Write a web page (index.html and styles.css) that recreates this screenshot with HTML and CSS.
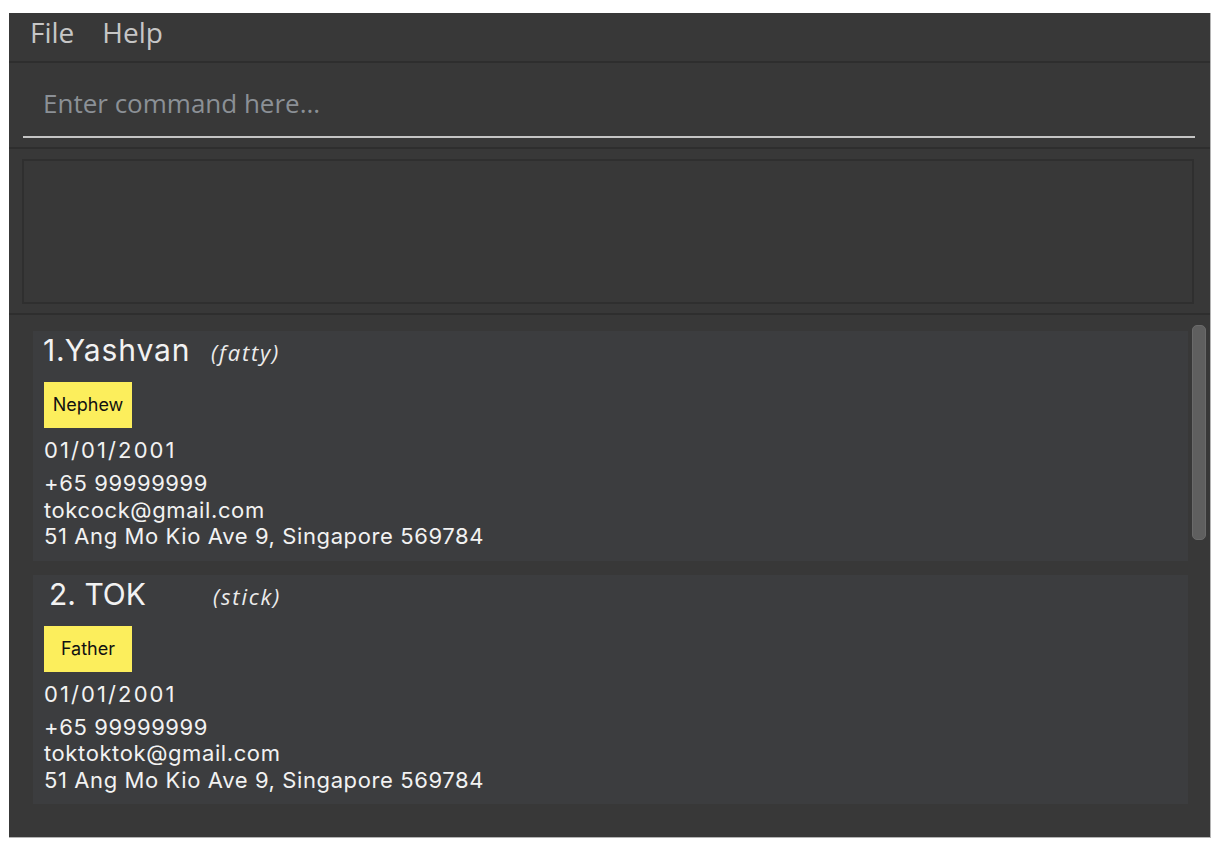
FILE: index.html
```html
<!DOCTYPE html>
<html lang="en">
<head>
<meta charset="utf-8">
<title>Address Book</title>
<link rel="stylesheet" href="styles.css">
</head>
<body>
<div class="app">
  <nav class="menubar">
    <span class="menu-item">File</span>
    <span class="menu-item">Help</span>
  </nav>
  <section class="command">
    <input class="command-input" type="text" placeholder="Enter command here...">
  </section>
  <section class="result">
    <div class="result-box"></div>
  </section>
  <section class="list">
    <div class="cards">
      <article class="card">
        <div class="card-head">
          <span class="card-name">1.Yashvan</span>
          <span class="card-nick">(fatty)</span>
        </div>
        <span class="tag">Nephew</span>
        <div class="card-date">01/01/2001</div>
        <div class="card-line">+65 99999999</div>
        <div class="card-line">tokcock@gmail.com</div>
        <div class="card-line">51 Ang Mo Kio Ave 9, Singapore 569784</div>
      </article>
      <article class="card">
        <div class="card-head">
          <span class="card-name card-name--indent">2. TOK</span>
          <span class="card-nick card-nick--shift">(stick)</span>
        </div>
        <span class="tag">Father</span>
        <div class="card-date">01/01/2001</div>
        <div class="card-line">+65 99999999</div>
        <div class="card-line">toktoktok@gmail.com</div>
        <div class="card-line">51 Ang Mo Kio Ave 9, Singapore 569784</div>
      </article>
    </div>
    <div class="scroll-track">
      <div class="scroll-thumb"></div>
    </div>
  </section>
</div>
</body>
</html>
```
FILE: styles.css
```css
html, body {
  margin: 0;
  padding: 0;
  background: #ffffff;
}

.app {
  margin: 13px 0 0 9px;
  width: 1201px;
  height: 824px;
  background: #383838;
  border-right: 1px solid #b4b4b4;
  border-bottom: 1px solid #b4b4b4;
  display: flex;
  flex-direction: column;
  overflow: hidden;
}

.menubar {
  height: 48px;
  border-bottom: 2px solid #2e2e2e;
  display: flex;
  gap: 28px;
  padding-left: 21px;
  font-family: "Open Sans", "Noto Sans", sans-serif;
  font-size: 28px;
  line-height: 38px;
  color: #c6c6c6;
  flex: none;
}

.command {
  height: 86px;
  box-sizing: border-box;
  padding: 24px 15px 0 14px;
  border-bottom: 2px solid #2e2e2e;
  flex: none;
}

.command-input {
  display: block;
  width: 100%;
  box-sizing: border-box;
  height: 51px;
  margin: 0;
  padding: 0 0 17px 20px;
  border: none;
  border-bottom: 2px solid #c4c4c4;
  background: transparent;
  outline: none;
  font-family: "Open Sans", "Noto Sans", sans-serif;
  font-size: 26px;
  line-height: 32px;
  color: #e0e0e0;
}

.command-input::placeholder {
  color: #8b9096;
}

.result {
  height: 166px;
  box-sizing: border-box;
  padding: 10px 16px 9px 13px;
  border-bottom: 2px solid #2e2e2e;
  flex: none;
}

.result-box {
  height: 100%;
  box-sizing: border-box;
  border: 2px solid #2f2f2f;
  background: #383838;
}

.list {
  flex: 1;
  display: flex;
  min-height: 0;
}

.cards {
  flex: 1;
  padding: 16px 0 0 24px;
  display: flex;
  flex-direction: column;
  gap: 14px;
}

.card {
  background: #3c3d3f;
  padding: 1px 0 11px 11px;
  font-family: "Inter", "Open Sans", sans-serif;
  color: #f2f2f2;
}

.card-head {
  display: flex;
  align-items: baseline;
  height: 36px;
}

.card-name {
  width: 168px;
  box-sizing: border-box;
  font-size: 30px;
  line-height: 36px;
  letter-spacing: 0.9px;
  margin-left: -1px;
}

.card-name--indent {
  padding-left: 6px;
  letter-spacing: 0;
}

.card-nick {
  font-family: "Open Sans", "Noto Sans", sans-serif;
  font-style: italic;
  font-size: 22px;
  letter-spacing: 1.8px;
  color: #ececec;
}

.card-nick--shift {
  margin-left: 2px;
}

.tag {
  display: block;
  width: 88px;
  height: 46px;
  margin-top: 14px;
  background: #fcee5c;
  color: #111111;
  font-size: 18px;
  line-height: 46px;
  text-align: center;
}

.card-date {
  margin-top: 9px;
  margin-bottom: 7px;
  font-size: 22px;
  line-height: 26px;
  letter-spacing: 2.1px;
}

.card-line {
  font-size: 22px;
  line-height: 26.5px;
  letter-spacing: 0.6px;
}

.scroll-track {
  width: 22px;
  box-sizing: border-box;
  padding: 10px 4px 0 4px;
  flex: none;
}

.scroll-thumb {
  height: 215px;
  box-sizing: border-box;
  background: #5f5f5f;
  border: 1px solid #6a6a6a;
  border-radius: 5px;
}
```
